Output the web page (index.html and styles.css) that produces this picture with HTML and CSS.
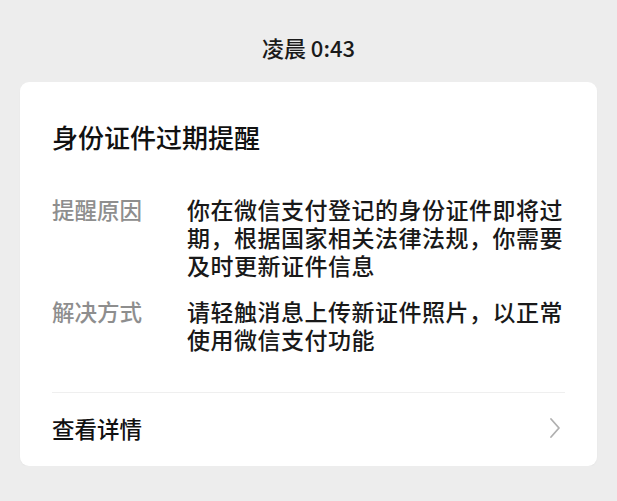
FILE: index.html
```html
<!DOCTYPE html>
<html lang="zh-CN">
<head>
<meta charset="utf-8">
<title>身份证件过期提醒</title>
<link rel="stylesheet" href="styles.css">
</head>
<body>
<div class="page">
  <div class="time">凌晨 0:43</div>
  <div class="card">
    <div class="title">身份证件过期提醒</div>
    <div class="rows">
      <div class="row">
        <div class="label">提醒原因</div>
        <div class="value">你在微信支付登记的身份证件即将过期，根据国家相关法律法规，你需要及时更新证件信息</div>
      </div>
      <div class="row">
        <div class="label">解决方式</div>
        <div class="value">请轻触消息上传新证件照片，以正常使用微信支付功能</div>
      </div>
    </div>
    <div class="footer">
      <span class="more">查看详情</span>
      <svg class="chevron" width="12" height="22" viewBox="0 0 12 22"><path d="M2 2 L10 11 L2 20" fill="none" stroke="#b0b0b0" stroke-width="1.8" stroke-linecap="round" stroke-linejoin="round"/></svg>
    </div>
  </div>
</div>
</body>
</html>
```
FILE: styles.css
```css
html, body {
  margin: 0;
  padding: 0;
  background: #ededed;
}
body {
  font-family: "Noto Sans CJK SC", "Noto Sans", sans-serif;
  color: #191919;
}
.page {
  display: flex;
  flex-direction: column;
  align-items: center;
  padding-top: 33px;
}
.time {
  font-size: 22px;
  line-height: 28px;
  font-weight: 500;
  color: #1a1a1a;
}
.card {
  align-self: stretch;
  margin: 21px 20px 0;
  background: #fff;
  border-radius: 9px;
  padding: 40px 32px 0;
  box-shadow: 0 1px 2px rgba(0,0,0,0.03);
}
.title {
  font-size: 26px;
  line-height: 30px;
  font-weight: 500;
  color: #111;
}
.rows {
  display: flex;
  flex-direction: column;
  gap: 18px;
  margin-top: 43px;
}
.row {
  display: flex;
}
.label {
  width: 135px;
  flex: none;
  font-size: 22.5px;
  line-height: 28px;
  font-weight: 500;
  color: #8e8e8e;
}
.value {
  flex: 1;
  font-size: 23px;
  line-height: 28px;
  letter-spacing: 0.5px;
  font-weight: 500;
  color: #191919;
}
.footer {
  margin-top: 39px;
  border-top: 1px solid #efefef;
  display: flex;
  align-items: center;
  justify-content: space-between;
  padding: 21px 0 24px;
}
.more {
  font-size: 22.5px;
  line-height: 28px;
  font-weight: 500;
  color: #111;
}
.chevron {
  margin-right: 4px;
}
```
